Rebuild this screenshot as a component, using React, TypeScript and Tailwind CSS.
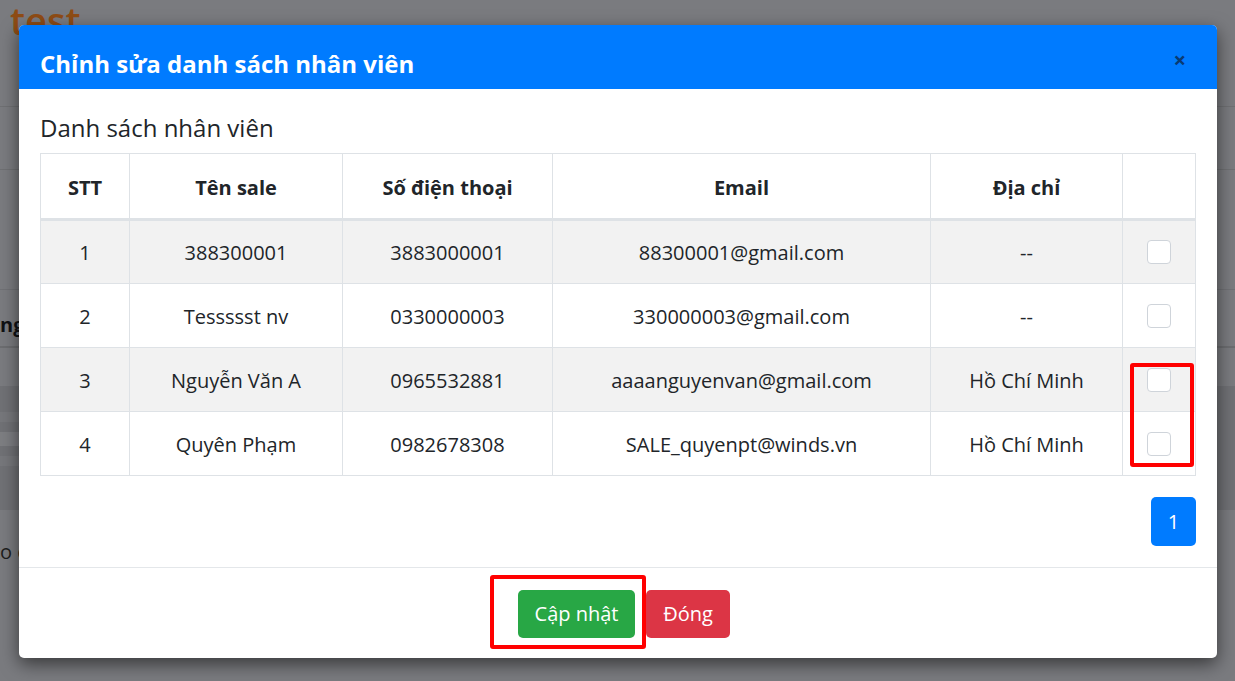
import React from 'react';

const rows = [
  { stt: 1, name: '388300001', phone: '3883000001', email: '88300001@gmail.com', addr: '--' },
  { stt: 2, name: 'Tessssst nv', phone: '0330000003', email: '330000003@gmail.com', addr: '--' },
  { stt: 3, name: 'Nguyễn Văn A', phone: '0965532881', email: 'aaaanguyenvan@gmail.com', addr: 'Hồ Chí Minh' },
  { stt: 4, name: 'Quyên Phạm', phone: '0982678308', email: 'SALE_quyenpt@winds.vn', addr: 'Hồ Chí Minh' },
];

const font = { fontFamily: '"Open Sans", "Noto Sans", sans-serif' };

function Checkbox() {
  return <span className="mx-auto block h-6 w-6 rounded-[4px] border border-[#cfd4da] bg-white" />;
}

export default function App() {
  return (
    <div className="relative h-[681px] w-[1235px] overflow-hidden bg-[#7a7b7f]" style={font}>
      {/* page behind the backdrop */}
      <div className="flex h-full flex-col">
        <div className="h-[42px] pl-[10px] pt-[2px] text-[38px] font-semibold leading-[36px] text-[#8f4c15]">test</div>
        <div className="mt-[64px] border-t border-[#6f7073]" />
        <div className="mt-[62px] border-t border-[#6f7073]" />
        <div className="mt-[119px] border-t border-[#707175]" />
        <div className="pt-[22px] text-[20px] font-bold leading-[26px] text-[#101114]">ng</div>
        <div className="mt-[8px] border-t-2 border-[#6c6d70]" />
        <div className="mt-[38px] flex h-[124px] flex-col gap-[10px] bg-[#707175] pt-[26px]">
          <div className="h-[10px] w-[50px] bg-[#76777b]" />
          <div className="h-[14px] w-[50px] bg-[#7d7e82]" />
          <div className="h-[10px] w-[50px] bg-[#76777b]" />
        </div>
        <div className="pt-[30px] text-[20px] leading-[24px] text-[#1d1e20]">o d</div>
      </div>

      {/* modal */}
      <div className="absolute left-[19px] top-[25px] flex h-[633px] w-[1198px] flex-col overflow-hidden rounded-[5px] bg-white shadow-[0_6px_18px_rgba(0,0,0,0.55)]">
        <div className="flex h-[64px] shrink-0 items-center justify-between bg-[#007bff] pl-[21px] pr-[31px]">
          <h4 className="pt-[13px] text-[24px] font-bold leading-none text-white">Chỉnh sửa danh sách nhân viên</h4>
          <span className="pt-[4px] text-[22px] font-bold leading-none text-[#0a3a72]">×</span>
        </div>

        <div className="flex flex-1 flex-col px-[21px] pt-[24px]">
          <h4 className="text-[24px] leading-[30px] text-[#212529]">Danh sách nhân viên</h4>
          <table className="mt-[10px] w-[1156px] border-collapse text-center text-[20px] text-[#212529]">
            <thead>
              <tr className="h-[66px] border-b-[3px] border-[#dee2e6]">
                <th className="w-[89px] border border-[#dee2e6] pt-[3px] font-bold">STT</th>
                <th className="w-[213px] border border-[#dee2e6] pt-[3px] font-bold">Tên sale</th>
                <th className="w-[210px] border border-[#dee2e6] pt-[3px] font-bold">Số điện thoại</th>
                <th className="w-[378px] border border-[#dee2e6] pt-[3px] font-bold">Email</th>
                <th className="w-[192px] border border-[#dee2e6] pt-[3px] font-bold">Địa chỉ</th>
                <th className="border border-[#dee2e6]" />
              </tr>
            </thead>
            <tbody>
              {rows.map((r) => (
                <tr key={r.stt} className={`h-[64px] ${r.stt % 2 === 1 ? 'bg-[#f2f2f2]' : 'bg-white'}`}>
                  <td className="border border-[#dee2e6] pt-[2px]">{r.stt}</td>
                  <td className="border border-[#dee2e6] pt-[2px]">{r.name}</td>
                  <td className="border border-[#dee2e6] pt-[2px]">{r.phone}</td>
                  <td className="border border-[#dee2e6] pt-[2px]">{r.email}</td>
                  <td className="border border-[#dee2e6] pt-[2px]">{r.addr}</td>
                  <td className="border border-[#dee2e6]">
                    <Checkbox />
                  </td>
                </tr>
              ))}
            </tbody>
          </table>
          <div className="mt-[21px] flex justify-end">
            <span className="flex h-[49px] w-[45px] items-center justify-center rounded-[5px] bg-[#007bff] text-[20px] text-white">1</span>
          </div>
        </div>

        <div className="flex h-[91px] shrink-0 items-center justify-center gap-[11px] border-t border-[#e4e7ea] pl-[12px] pt-[1px]">
          <button className="h-[48px] w-[117px] rounded-[5px] bg-[#28a745] text-[20px] text-white">Cập nhật</button>
          <button className="h-[48px] w-[84px] rounded-[5px] bg-[#dc3545] text-[20px] text-white">Đóng</button>
        </div>
      </div>

      {/* annotation boxes */}
      <div className="absolute left-[1130px] top-[363px] h-[104px] w-[64px] rounded-[3px] border-[4px] border-[#ff0000]" />
      <div className="absolute left-[490px] top-[575px] h-[74px] w-[156px] rounded-[3px] border-[4px] border-[#ff0000]" />
    </div>
  );
}
